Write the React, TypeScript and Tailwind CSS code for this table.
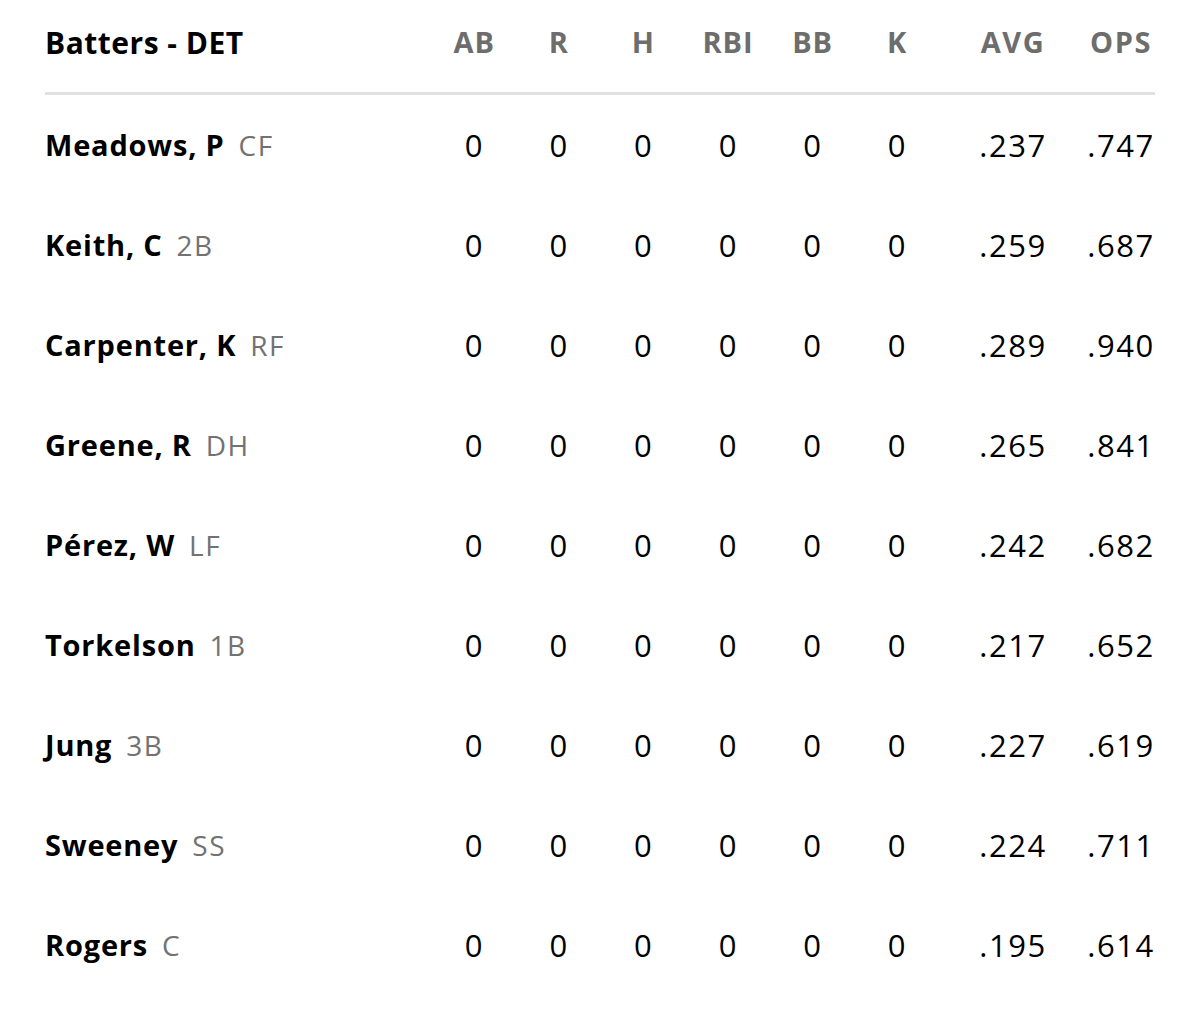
const batters = [
  { name: 'Meadows, P', pos: 'CF', avg: '.237', ops: '.747' },
  { name: 'Keith, C', pos: '2B', avg: '.259', ops: '.687' },
  { name: 'Carpenter, K', pos: 'RF', avg: '.289', ops: '.940' },
  { name: 'Greene, R', pos: 'DH', avg: '.265', ops: '.841' },
  { name: 'Pérez, W', pos: 'LF', avg: '.242', ops: '.682' },
  { name: 'Torkelson', pos: '1B', avg: '.217', ops: '.652' },
  { name: 'Jung', pos: '3B', avg: '.227', ops: '.619' },
  { name: 'Sweeney', pos: 'SS', avg: '.224', ops: '.711' },
  { name: 'Rogers', pos: 'C', avg: '.195', ops: '.614' },
]

const cols = ['AB', 'R', 'H', 'RBI', 'BB', 'K']

// name column + six counting stats + AVG + OPS
const grid = 'grid grid-cols-[1fr_repeat(6,84.6px)_146px_70px] items-center'

export default function App() {
  return (
    <div className="min-h-screen bg-white px-[45px] font-['Open_Sans',sans-serif] antialiased">
      {/* header */}
      <div className={`${grid} h-[84px]`}>
        <div className="text-[30px] font-bold tracking-[0.5px] text-black">Batters - DET</div>
        {cols.map((c) => (
          <div key={c} className="pl-[1px] text-center text-[29px] font-bold tracking-[1px] text-[#6d6d6d]">
            {c}
          </div>
        ))}
        <div className="pl-[2px] text-center text-[29px] font-bold tracking-[1.5px] text-[#6d6d6d]">AVG</div>
        <div className="pl-[2px] text-center text-[29px] font-bold tracking-[1.5px] text-[#6d6d6d]">OPS</div>
      </div>

      <div className="mt-[8px] h-[3px] bg-[#e0e0e0]" />

      {/* rows */}
      {batters.map((b) => (
        <div key={b.name} className={`${grid} h-[100px]`}>
          <div className="flex items-baseline gap-[14px] whitespace-nowrap">
            <span className="text-[29px] font-bold tracking-[0.8px] text-black">{b.name}</span>
            <span className="text-[28px] tracking-[1.5px] text-[#727272]">{b.pos}</span>
          </div>
          {cols.map((c) => (
            <div key={c} className="text-center text-[31px] text-black">
              0
            </div>
          ))}
          <div className="pl-[2px] text-center text-[31px] tracking-[1.5px] text-black">{b.avg}</div>
          <div className="pl-[2px] text-center text-[31px] tracking-[1.5px] text-black">{b.ops}</div>
        </div>
      ))}
    </div>
  )
}
